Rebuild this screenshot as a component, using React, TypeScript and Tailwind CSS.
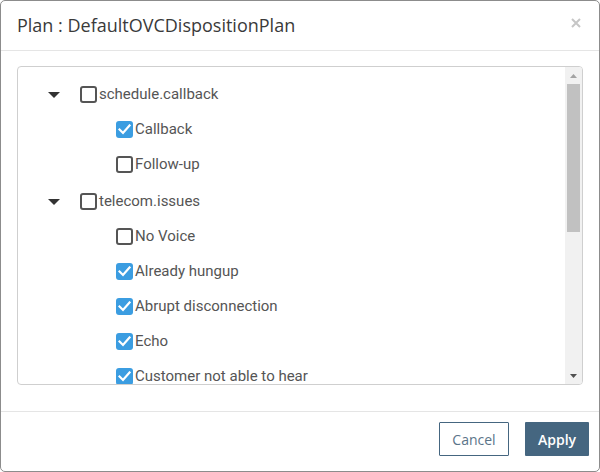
import { useState } from 'react';

type Node = { label: string; checked: boolean; children?: Node[] };

const initialTree: Node[] = [
  {
    label: 'schedule.callback',
    checked: false,
    children: [
      { label: 'Callback', checked: true },
      { label: 'Follow-up', checked: false },
    ],
  },
  {
    label: 'telecom.issues',
    checked: false,
    children: [
      { label: 'No Voice', checked: false },
      { label: 'Already hungup', checked: true },
      { label: 'Abrupt disconnection', checked: true },
      { label: 'Echo', checked: true },
      { label: 'Customer not able to hear', checked: true },
    ],
  },
];

function Checkbox({ checked }: { checked: boolean }) {
  if (checked) {
    return (
      <span className="flex h-[17px] w-[17px] shrink-0 items-center justify-center rounded-[3px] bg-[#3b9de1]">
        <svg width="13" height="11" viewBox="0 0 13 11" fill="none">
          <path d="M1.5 5.5 L5 9 L11.5 1.5" stroke="white" strokeWidth="2.2" strokeLinecap="square" />
        </svg>
      </span>
    );
  }
  return <span className="h-[17px] w-[17px] shrink-0 rounded-[3px] border-2 border-[#555] bg-white" />;
}

function Row({ node, level }: { node: Node; level: number }) {
  return (
    <div className="flex h-[35px] items-center">
      {level === 0 ? (
        <span className="ml-[30px] mr-[20px] flex w-[12px] justify-center">
          <svg width="12" height="6" viewBox="0 0 12 6">
            <path d="M0 0 L12 0 L6 6 Z" fill="#333" />
          </svg>
        </span>
      ) : (
        <span className="ml-[98px]" />
      )}
      <Checkbox checked={node.checked} />
      <span className="ml-[2px] whitespace-nowrap text-[15px] text-[#555]">{node.label}</span>
    </div>
  );
}

export default function App() {
  const [tree] = useState(initialTree);

  return (
    <div
      className="flex h-[472px] w-[600px] flex-col overflow-hidden rounded-[5px] border border-[#8c8c8c] bg-white"
      style={{ fontFamily: '"Open Sans", sans-serif' }}
    >
      <header className="flex h-[50px] shrink-0 items-center justify-between border-b border-[#e5e5e5] pl-[16px] pr-[18px]">
        <h1 className="text-[18px] text-[#3a3a3a]">Plan : DefaultOVCDispositionPlan</h1>
        <svg width="10" height="10" viewBox="0 0 10 10" className="mb-[6px]">
          <path d="M1 1 L9 9 M9 1 L1 9" stroke="#c6c6c6" strokeWidth="2" />
        </svg>
      </header>

      <main className="flex-1 px-[16px] pb-[26px] pt-[15px]">
        <div className="flex h-[319px] overflow-hidden rounded-[4px] border border-[#cfcfcf]">
          <div
            className="flex-1 overflow-hidden pt-[10px]"
            style={{ fontFamily: 'Roboto, sans-serif' }}
          >
            {tree.map((group, i) => (
              <div key={group.label} className={i > 0 ? 'mt-[2px]' : ''}>
                <Row node={group} level={0} />
                {group.children?.map((child) => (
                  <Row key={child.label} node={child} level={1} />
                ))}
              </div>
            ))}
          </div>
          <div className="flex w-[17px] shrink-0 flex-col bg-[#f1f1f1]">
            <div className="flex h-[17px] items-center justify-center">
              <svg width="7" height="4" viewBox="0 0 7 4">
                <path d="M0 4 L7 4 L3.5 0 Z" fill="#a3a3a3" />
              </svg>
            </div>
            <div className="mx-[2px] h-[148px] bg-[#c1c1c1]" />
            <div className="flex-1" />
            <div className="flex h-[17px] items-center justify-center">
              <svg width="7" height="4" viewBox="0 0 7 4">
                <path d="M0 0 L7 0 L3.5 4 Z" fill="#505050" />
              </svg>
            </div>
          </div>
        </div>
      </main>

      <footer className="flex h-[60px] shrink-0 items-start justify-end gap-[16px] border-t border-[#e5e5e5] pr-[10px] pt-[10px]">
        <button className="h-[34px] w-[70px] rounded-[1px] border border-[#456680] bg-white text-[14px] text-[#5b7489]">
          Cancel
        </button>
        <button className="h-[34px] w-[64px] rounded-[1px] bg-[#456680] text-[14px] font-semibold text-white">
          Apply
        </button>
      </footer>
    </div>
  );
}
